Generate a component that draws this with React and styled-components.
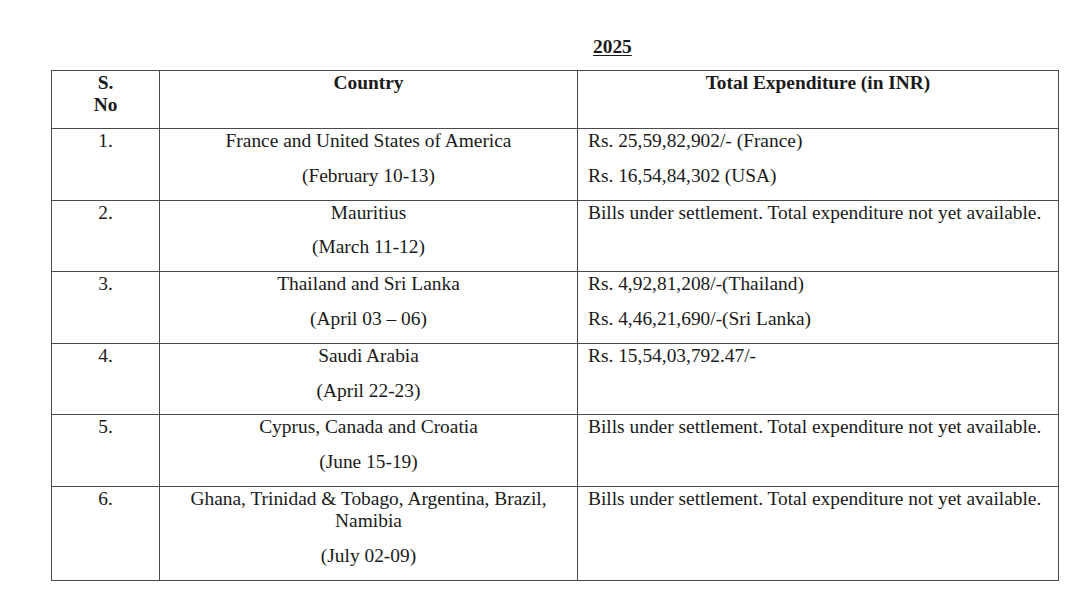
import React from "react";
import styled, { createGlobalStyle } from "styled-components";

const Global = createGlobalStyle`
  html, body { margin: 0; padding: 0; background: #fff; }
  body { font-family: "Liberation Serif", "Times New Roman", serif; color: #1a1a1a; }
`;

const Page = styled.div`
  width: 1079px;
  height: 611px;
  padding: 36px 0 0 51px;
  box-sizing: border-box;
`;

const Year = styled.div`
  font-weight: bold;
  font-size: 19.4px;
  line-height: 22px;
  text-decoration: underline;
  text-underline-offset: 2px;
  padding-left: 542px;
  margin-bottom: 12px;
`;

const Table = styled.table`
  border-collapse: collapse;
  table-layout: fixed;
  width: 1007px;
  font-size: 19.4px;
`;

const Col = styled.col`
  width: ${(p) => p.$w}px;
`;

const Cell = styled.td`
  border: 1px solid #4a4a4a;
  padding: 1px 10px 0;
  vertical-align: top;
  text-align: ${(p) => p.$align || "center"};
  font-weight: ${(p) => (p.$head ? "bold" : "normal")};
`;

const Para = styled.p`
  margin: 0 0 ${(p) => (p.$head ? "12px" : "12.8px")};
  line-height: 22px;
`;

const rows = [
  ["1.", ["France and United States of America", "(February 10-13)"], ["Rs. 25,59,82,902/- (France)", "Rs. 16,54,84,302 (USA)"]],
  ["2.", ["Mauritius", "(March 11-12)"], ["Bills under settlement. Total expenditure not yet available."]],
  ["3.", ["Thailand and Sri Lanka", "(April 03 \u2013 06)"], ["Rs. 4,92,81,208/-(Thailand)", "Rs. 4,46,21,690/-(Sri Lanka)"]],
  ["4.", ["Saudi Arabia", "(April 22-23)"], ["Rs. 15,54,03,792.47/-"]],
  ["5.", ["Cyprus, Canada and Croatia", "(June 15-19)"], ["Bills under settlement. Total expenditure not yet available."]],
  ["6.", ["Ghana, Trinidad & Tobago, Argentina, Brazil, Namibia", "(July 02-09)"], ["Bills under settlement. Total expenditure not yet available."]],
];

export default function App() {
  return (
    <>
      <Global />
      <Page>
        <Year>2025</Year>
        <Table>
          <colgroup>
            <Col $w={108} />
            <Col $w={418} />
            <Col $w={481} />
          </colgroup>
          <thead>
            <tr>
              <Cell as="th" $head>
                <Para $head>S.<br />No</Para>
              </Cell>
              <Cell as="th" $head>
                <Para $head>Country</Para>
              </Cell>
              <Cell as="th" $head>
                <Para $head>Total Expenditure (in INR)</Para>
              </Cell>
            </tr>
          </thead>
          <tbody>
            {rows.map(([n, country, exp]) => (
              <tr key={n}>
                <Cell><Para>{n}</Para></Cell>
                <Cell>
                  {country.map((c) => <Para key={c}>{c}</Para>)}
                </Cell>
                <Cell $align="left">
                  {exp.map((e) => <Para key={e}>{e}</Para>)}
                </Cell>
              </tr>
            ))}
          </tbody>
        </Table>
      </Page>
    </>
  );
}
